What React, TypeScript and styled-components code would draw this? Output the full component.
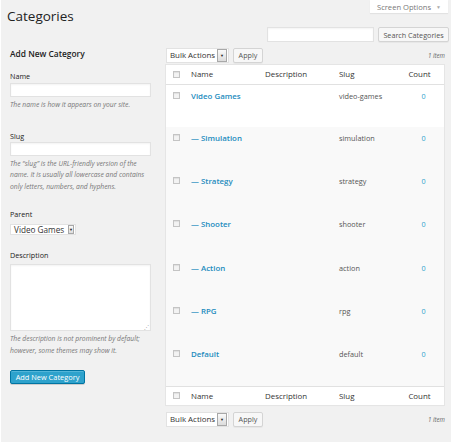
import styled, { createGlobalStyle } from 'styled-components'

const GlobalStyle = createGlobalStyle`
  html, body {
    margin: 0;
    padding: 0;
    background: #fff;
  }
  body {
    font-family: "Open Sans", "Liberation Sans", sans-serif;
    color: #444;
  }
`

const Page = styled.div`
  margin-left: 1px;
  height: 442px;
  background: #f1f1f1;
  overflow: hidden;
`

const Header = styled.div`
  display: flex;
  justify-content: space-between;
  align-items: flex-start;
  height: 27px;
`

const Title = styled.h2`
  margin: 6px 0 0 6px;
  font-size: 13.5px;
  line-height: 20px;
  font-weight: 400;
  color: #222;
`

const ScreenTab = styled.div`
  margin-right: 3px;
  width: 78px;
  height: 13px;
  background: #fff;
  box-shadow: 0 1px 1px rgba(0, 0, 0, .06);
  display: flex;
  align-items: center;
  justify-content: center;
  gap: 5px;
  font-size: 7.6px;
  color: #777;
`

const Caret = styled.span`
  font-size: 5px;
  color: #aaa;
`

const SearchRow = styled.div`
  display: flex;
  justify-content: flex-end;
  gap: 4px;
  margin-right: 2px;
  height: 15px;
`

const TextInput = styled.div<{ $w?: number; $h?: number }>`
  box-sizing: border-box;
  width: ${p => (p.$w ? `${p.$w}px` : '100%')};
  height: ${p => p.$h ?? 14}px;
  background: #fff;
  border: 1px solid #e2e2e2;
  box-shadow: inset 0 1px 2px rgba(0, 0, 0, .05);
  position: relative;
`

const Grip = styled.span`
  position: absolute;
  right: 1px;
  bottom: 0;
  font-size: 5px;
  line-height: 5px;
  color: #999;
`

const Button = styled.div<{ $w: number }>`
  box-sizing: border-box;
  width: ${p => p.$w}px;
  height: 15px;
  display: flex;
  align-items: center;
  justify-content: center;
  background: #f7f7f7;
  border: 1px solid #d4d4d4;
  border-radius: 2px;
  box-shadow: 0 1px 0 rgba(0, 0, 0, .04);
  font-size: 7.2px;
  color: #555;
  white-space: nowrap;
`

const PrimaryButton = styled.div`
  box-sizing: border-box;
  width: 75px;
  height: 14px;
  display: flex;
  align-items: center;
  justify-content: center;
  background: #2ea2cc;
  border: 1px solid #0074a2;
  border-radius: 2px;
  box-shadow: inset 0 1px 0 rgba(120, 200, 230, .5), 0 1px 0 rgba(0, 0, 0, .15);
  font-size: 7.4px;
  color: #fff;
  white-space: nowrap;
`

const Columns = styled.div`
  display: flex;
  margin-top: 5px;
  padding-left: 9px;
`

const LeftCol = styled.div`
  width: 141px;
  flex-shrink: 0;
`

const RightCol = styled.div`
  width: 279px;
  margin-left: 15px;
`

const Heading = styled.h3`
  margin: 1px 0 11px;
  font-size: 8.4px;
  line-height: 12px;
  font-weight: 600;
  color: #222;
`

const Field = styled.div<{ $mb: number }>`
  margin-bottom: ${p => p.$mb}px;
`

const Label = styled.div<{ $mb?: number }>`
  font-size: 7.2px;
  line-height: 10px;
  color: #222;
  margin-bottom: ${p => p.$mb ?? 2}px;
`

const Help = styled.p`
  margin: 2px 0 0;
  font-size: 6.75px;
  line-height: 11.6px;
  font-style: italic;
  color: #777;
`

const Select = styled.div<{ $w: number; $h: number; $fs: number }>`
  box-sizing: border-box;
  width: ${p => p.$w}px;
  height: ${p => p.$h}px;
  display: flex;
  align-items: center;
  background: #fff;
  border: 1px solid #e2e2e2;
  padding-left: 3px;
  font-size: ${p => p.$fs}px;
  color: #333;
  white-space: nowrap;
`

const SelectText = styled.span`
  flex: 1;
`

const ArrowBox = styled.span<{ $w: number; $h: number }>`
  box-sizing: border-box;
  width: ${p => p.$w}px;
  height: ${p => p.$h}px;
  margin-right: 1px;
  display: flex;
  align-items: center;
  justify-content: center;
  background: linear-gradient(#fafafa, #dcdcdc);
  border: 1px solid #a8a8a8;
  font-size: 4px;
  color: #222;
`

const TableNav = styled.div<{ $mt?: number }>`
  display: flex;
  align-items: center;
  gap: 4px;
  height: 16px;
  margin-top: ${p => p.$mt ?? 0}px;
  margin-bottom: 2px;
`

const ItemCount = styled.span`
  margin-left: auto;
  font-size: 6.2px;
  font-style: italic;
  color: #666;
`

const Table = styled.table`
  width: 278px;
  border-collapse: collapse;
  table-layout: fixed;
  background: #fff;
  box-shadow: 0 0 0 1px #e5e5e5, 0 1px 1px rgba(0, 0, 0, .04);
`

const HeadCell = styled.th<{ $w?: number; $center?: boolean }>`
  box-sizing: border-box;
  width: ${p => (p.$w ? `${p.$w}px` : 'auto')};
  height: 19px;
  padding: 0 ${p => (p.$center ? 5 : 0)}px 0 ${p => (p.$center ? 0 : 5)}px;
  text-align: ${p => (p.$center ? 'center' : 'left')};
  font-size: 7.9px;
  font-weight: 400;
  color: #333;
`

const HeadRow = styled.tr<{ $top?: boolean }>`
  ${p => (p.$top ? 'border-bottom: 1px solid #e1e1e1;' : 'border-top: 1px solid #e1e1e1;')}
`

const Row = styled.tr<{ $alt: boolean }>`
  background: ${p => (p.$alt ? '#f9f9f9' : '#fff')};
`

const Cell = styled.td<{ $center?: boolean }>`
  box-sizing: border-box;
  height: 43.17px;
  vertical-align: top;
  padding: 5px 0 0 ${p => (p.$center ? 3 : 5)}px;
  text-align: ${p => (p.$center ? 'center' : 'left')};
  line-height: 12px;
  font-size: 7.3px;
  color: #555;
`

const CbCell = styled.td`
  box-sizing: border-box;
  height: 43.17px;
  vertical-align: top;
  padding: 7px 0 0 7px;
`

const CbHead = styled.th`
  box-sizing: border-box;
  width: 20px;
  padding: 0 0 0 7px;
  text-align: left;
`

const Checkbox = styled.span`
  display: block;
  box-sizing: border-box;
  width: 7px;
  height: 7px;
  border: 1px solid #c4c4c4;
  background: #f3f3f3;
  box-shadow: inset 0 1px 1px rgba(0, 0, 0, .08);
`

const NameLink = styled.a`
  font-size: 7.9px;
  font-weight: 600;
  color: #1e8cbe;
  text-decoration: none;
`

const CountLink = styled.a`
  font-size: 7.2px;
  color: #2ea2cc;
  text-decoration: none;
`

const rows = [
  { name: 'Video Games', slug: 'video-games' },
  { name: '— Simulation', slug: 'simulation' },
  { name: '— Strategy', slug: 'strategy' },
  { name: '— Shooter', slug: 'shooter' },
  { name: '— Action', slug: 'action' },
  { name: '— RPG', slug: 'rpg' },
  { name: 'Default', slug: 'default' },
]

const BulkNav = ({ mt }: { mt?: number }) => (
  <TableNav $mt={mt}>
    <Select $w={63} $h={15} $fs={7.9}>
      <SelectText>Bulk Actions</SelectText>
      <ArrowBox $w={10} $h={13}>▼</ArrowBox>
    </Select>
    <Button $w={30}>Apply</Button>
    <ItemCount>1 item</ItemCount>
  </TableNav>
)

const ColumnHeads = ({ top }: { top?: boolean }) => (
  <HeadRow $top={top}>
    <CbHead>
      <Checkbox />
    </CbHead>
    <HeadCell $w={74}>Name</HeadCell>
    <HeadCell $w={74}>Description</HeadCell>
    <HeadCell $w={66}>Slug</HeadCell>
    <HeadCell $center>Count</HeadCell>
  </HeadRow>
)

export default function App() {
  return (
    <Page>
      <GlobalStyle />
      <Header>
        <Title>Categories</Title>
        <ScreenTab>
          Screen Options <Caret>▼</Caret>
        </ScreenTab>
      </Header>
      <SearchRow>
        <TextInput $w={107} $h={15} />
        <Button $w={71}>Search Categories</Button>
      </SearchRow>
      <Columns>
        <LeftCol>
          <Heading>Add New Category</Heading>
          <Field $mb={20}>
            <Label>Name</Label>
            <TextInput />
            <Help>The name is how it appears on your site.</Help>
          </Field>
          <Field $mb={17}>
            <Label $mb={1}>Slug</Label>
            <TextInput />
            <Help>
              The “slug” is the URL-friendly version of the name. It is usually all lowercase and contains
              only letters, numbers, and hyphens.
            </Help>
          </Field>
          <Field $mb={15}>
            <Label $mb={5}>Parent</Label>
            <Select $w={66} $h={11} $fs={8.2}>
              <SelectText>Video Games</SelectText>
              <ArrowBox $w={6} $h={9}>▼</ArrowBox>
            </Select>
          </Field>
          <Field $mb={13}>
            <Label $mb={4}>Description</Label>
            <TextInput $h={67}>
              <Grip>⋰</Grip>
            </TextInput>
            <Help>The description is not prominent by default; however, some themes may show it.</Help>
          </Field>
          <PrimaryButton>Add New Category</PrimaryButton>
        </LeftCol>
        <RightCol>
          <BulkNav />
          <Table>
            <thead>
              <ColumnHeads top />
            </thead>
            <tbody>
              {rows.map((r, i) => (
                <Row key={r.slug} $alt={i > 0}>
                  <CbCell>
                    <Checkbox />
                  </CbCell>
                  <Cell>
                    <NameLink>{r.name}</NameLink>
                  </Cell>
                  <Cell />
                  <Cell>{r.slug}</Cell>
                  <Cell $center>
                    <CountLink>0</CountLink>
                  </Cell>
                </Row>
              ))}
            </tbody>
            <tfoot>
              <ColumnHeads />
            </tfoot>
          </Table>
          <BulkNav mt={6} />
        </RightCol>
      </Columns>
    </Page>
  )
}
